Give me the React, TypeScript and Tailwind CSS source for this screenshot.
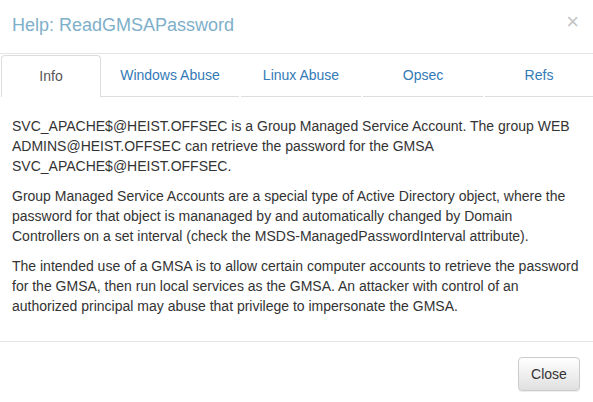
export default function App() {
  const tabs = [
    { label: "Windows Abuse", cls: "w-[138px]" },
    { label: "Linux Abuse", cls: "w-[120px] ml-[2px]" },
    { label: "Opsec", cls: "w-[120px] ml-[2px]" },
    { label: "Refs", cls: "flex-1 ml-[2px]" },
  ];
  return (
    <div className="w-[593px] h-[402px] bg-white text-[14px] leading-[20px] text-[#333] font-['Liberation_Sans',Arial,sans-serif] flex flex-col">
      {/* header */}
      <div className="h-[54px] border-b border-[#e5e5e5] flex items-start justify-between pl-[12px] pr-[14px] pt-[12px]">
        <h4 className="text-[18px] leading-[26px] text-[#7eafca]">Help: ReadGMSAPassword</h4>
        <button className="text-[22px] leading-[21px] font-normal text-[#c4c4c4] mt-[-1px]">×</button>
      </div>

      {/* tabs */}
      <div className="flex h-[42px] mt-[1px]">
        <div className="w-[100px] ml-[1px] border border-b-0 border-[#ddd] rounded-t-[4px] flex items-center justify-center text-[#555] pb-[1px]">
          Info
        </div>
        {tabs.map((t) => (
          <div key={t.label} className={`${t.cls} border-b border-[#ddd] flex items-center justify-center text-[#337ab7] pb-[1px]`}>
            {t.label}
          </div>
        ))}
      </div>

      {/* body */}
      <div className="px-[12px] pt-[19px] pb-[15px] border-b border-[#e5e5e5]">
        <p className="mb-[10px]">
          SVC_APACHE$@HEIST.OFFSEC is a Group Managed Service Account. The group WEB
          <br />
          ADMINS@HEIST.OFFSEC can retrieve the password for the GMSA
          <br />
          SVC_APACHE$@HEIST.OFFSEC.
        </p>
        <p className="mb-[10px]">
          Group Managed Service Accounts are a special type of Active Directory object, where the
          <br />
          password for that object is mananaged by and automatically changed by Domain
          <br />
          Controllers on a set interval (check the MSDS-ManagedPasswordInterval attribute).
        </p>
        <p className="mb-[10px]">
          The intended use of a GMSA is to allow certain computer accounts to retrieve the password
          <br />
          for the GMSA, then run local services as the GMSA. An attacker with control of an
          <br />
          authorized principal may abuse that privilege to impersonate the GMSA.
        </p>
      </div>

      {/* footer */}
      <div className="flex justify-end pt-[15px] pr-[13px]">
        <button className="h-[34px] w-[62px] rounded-[4px] border border-[#ccc] bg-gradient-to-b from-white to-[#e0e0e0] text-[#333] shadow-[0_1px_0_rgba(255,255,255,0.15)_inset,0_1px_1px_rgba(0,0,0,0.075)]">
          Close
        </button>
      </div>
    </div>
  );
}
